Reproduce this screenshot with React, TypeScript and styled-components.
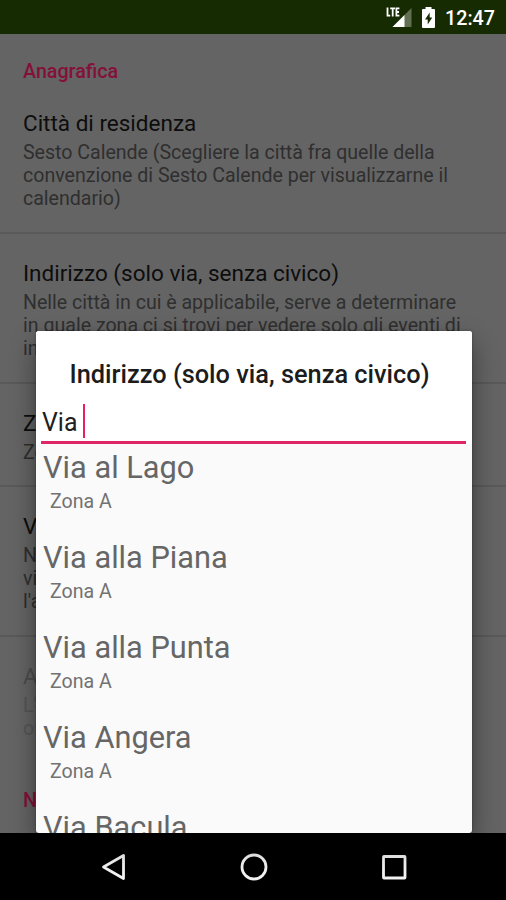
import React from "react";
import styled, { createGlobalStyle } from "styled-components";

const Global = createGlobalStyle`
  * { box-sizing: border-box; }
  html, body { margin: 0; padding: 0; background: #000; overflow: hidden; }
  body { font-family: Roboto, "Noto Sans", sans-serif; }
`;

const Screen = styled.div`
  position: relative;
  display: flex;
  flex-direction: column;
  width: 506px;
  height: 900px;
  overflow: hidden;
  background: #646464;
`;

const StatusBar = styled.header`
  display: flex;
  justify-content: flex-end;
  align-items: center;
  flex: none;
  height: 34px;
  padding: 1px 11px 0 0;
  background: #172b02;
  color: #fff;
`;

const StatusIcons = styled.div`
  display: flex;
  align-items: center;
  gap: 8px;
`;

const Clock = styled.span`
  margin-left: 9px;
  padding-top: 2px;
  font-size: 19.7px;
  font-weight: 500;
  line-height: 24px;
`;

const Settings = styled.main`
  flex: 1;
  min-height: 0;
  overflow: hidden;
  display: flex;
  flex-direction: column;
`;

const Category = styled.h2<{ $top: number }>`
  flex: none;
  margin: 0;
  padding: ${(p) => p.$top}px 23px 0;
  font-size: 19.7px;
  font-weight: 500;
  line-height: 24px;
  color: #84103a;
`;

const Preference = styled.section<{ $height: number; $last?: boolean; $disabled?: boolean }>`
  flex: none;
  height: ${(p) => p.$height}px;
  padding: 25px 23px 0;
  border-bottom: ${(p) => (p.$last ? "0" : "2px solid #595959")};
  opacity: ${(p) => (p.$disabled ? 0.27 : 1)};
`;

const PreferenceTitle = styled.h3`
  margin: 0;
  font-size: 22.5px;
  font-weight: 400;
  line-height: 28px;
  white-space: nowrap;
  color: #0d0d0d;
`;

const Summary = styled.p`
  margin: 4px 0 0;
  font-size: 19.6px;
  letter-spacing: -0.02px;
  line-height: 23px;
  white-space: pre;
  color: #2f2f2f;
`;

const Dialog = styled.div`
  position: absolute;
  left: 36px;
  top: 331px;
  width: 436px;
  height: 502px;
  display: flex;
  flex-direction: column;
  border-radius: 3px;
  background: #fafafa;
  box-shadow: 0 12px 26px rgba(0, 0, 0, 0.42), 0 0 3px rgba(0, 0, 0, 0.3);
  overflow: hidden;
`;

const DialogHeader = styled.div`
  flex: none;
  height: 113px;
  padding: 28px 6px 0 5px;
  background: #fff;
`;

const DialogTitle = styled.h1`
  margin: 0;
  padding-left: 28.5px;
  font-size: 25.35px;
  font-weight: 500;
  line-height: 31px;
  white-space: nowrap;
  color: #1c1c1c;
`;

const Field = styled.div`
  display: flex;
  align-items: flex-start;
  height: 54px;
  padding-top: 14px;
  border-bottom: 3px solid #df2467;
`;

const FieldText = styled.span`
  width: 42px;
  padding: 1px 0 0 1px;
  font-size: 24.9px;
  line-height: 36px;
  color: #202020;
`;

const Caret = styled.span`
  width: 2px;
  height: 34px;
  background: #e91e63;
`;

const Results = styled.div`
  flex: 1;
  min-height: 0;
  overflow: hidden;
`;

const Result = styled.div`
  height: 90px;
  padding: 5px 7px 0;
`;

const Street = styled.div`
  font-size: 30.75px;
  line-height: 38px;
  white-space: nowrap;
  color: #666;
`;

const Zone = styled.div`
  padding: 3px 0 0 7px;
  font-size: 19.6px;
  line-height: 24px;
  color: #727272;
`;

const NavigationBar = styled.nav`
  display: flex;
  justify-content: center;
  align-items: center;
  gap: 112px;
  flex: none;
  height: 67px;
  padding-left: 1px;
  background: #000;
`;

const SignalIcon = () => (
  <svg width="28" height="24" viewBox="0 0 28 24">
    <path d="M26.5 2V21H7.5Z" fill="#fff" opacity=".32" />
    <path d="M19.5 9V21H7.5Z" fill="#fff" />
    <path d="M2.5 1.5V9.7H5.2M5.2 2.4H10M7.7 2.4V10.5M14.4 2.4H11.4V9.7H14.4M11.4 6H14" stroke="#fff" strokeWidth="1.8" fill="none" />
  </svg>
);

const BatteryIcon = () => (
  <svg width="15" height="24" viewBox="0 0 15 24">
    <path d="M4.5 1H10.5V3H13Q14 3 14 4V21Q14 22 13 22H2Q1 22 1 21V4Q1 3 2 3H4.5Z" fill="#fff" />
    <path d="M8.7 6.5L4 13.5H6.7V18.5L11.3 11.5H8.7Z" fill="#172b02" />
  </svg>
);

const preferences = [
  {
    title: "Città di residenza",
    summary:
      "Sesto Calende (Scegliere la città fra quelle della\nconvenzione di Sesto Calende per visualizzarne il\ncalendario)",
    height: 150,
  },
  {
    title: "Indirizzo (solo via, senza civico)",
    summary:
      "Nelle città in cui è applicabile, serve a determinare\nin quale zona ci si trovi per vedere solo gli eventi di\ninteresse",
    height: 150,
  },
  { title: "Zona", summary: "Zona A", height: 103 },
  { title: "Visualizza", summary: "Nel calendario\nvisualizza\nl'avviso", height: 150 },
];

const streets = ["Via al Lago", "Via alla Piana", "Via alla Punta", "Via Angera", "Via Bacula"];

export default function App() {
  return (
    <>
      <Global />
      <Screen>
        <StatusBar>
          <StatusIcons>
            <SignalIcon />
            <BatteryIcon />
          </StatusIcons>
          <Clock>12:47</Clock>
        </StatusBar>
        <Settings>
          <Category $top={26}>Anagrafica</Category>
          {preferences.map((p) => (
            <Preference key={p.title} $height={p.height}>
              <PreferenceTitle>{p.title}</PreferenceTitle>
              <Summary>{p.summary}</Summary>
            </Preference>
          ))}
          <Preference $height={128} $last $disabled>
            <PreferenceTitle>Avviso</PreferenceTitle>
            <Summary>{"L'avviso\nore"}</Summary>
          </Preference>
          <Category $top={24}>Notifiche</Category>
        </Settings>
        <Dialog>
          <DialogHeader>
            <DialogTitle>Indirizzo (solo via, senza civico)</DialogTitle>
            <Field>
              <FieldText>Via</FieldText>
              <Caret />
            </Field>
          </DialogHeader>
          <Results>
            {streets.map((s) => (
              <Result key={s}>
                <Street>{s}</Street>
                <Zone>Zona A</Zone>
              </Result>
            ))}
          </Results>
        </Dialog>
        <NavigationBar>
          <svg width="28" height="30" viewBox="0 0 28 30" fill="none" stroke="#f2f2f2" strokeWidth="2.8">
            <path d="M23.5 3.5V26.5L3.5 15Z" strokeLinejoin="round" />
          </svg>
          <svg width="28" height="30" viewBox="0 0 28 30" fill="none" stroke="#f2f2f2" strokeWidth="2.8">
            <circle cx="14" cy="15" r="12" />
          </svg>
          <svg width="28" height="30" viewBox="0 0 28 30" fill="none" stroke="#f2f2f2" strokeWidth="2.8">
            <rect x="3.5" y="4.5" width="21.5" height="21.5" rx=".5" />
          </svg>
        </NavigationBar>
      </Screen>
    </>
  );
}
